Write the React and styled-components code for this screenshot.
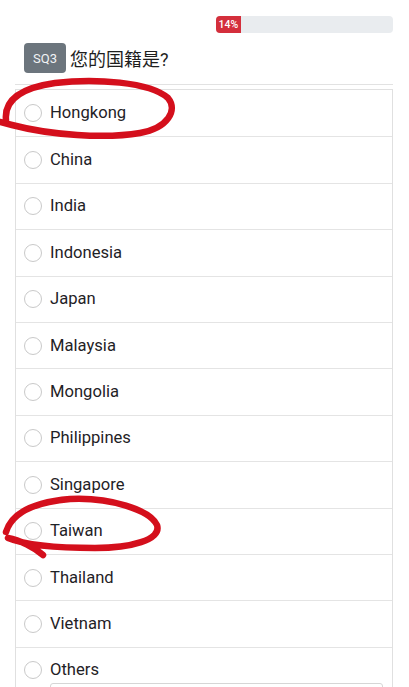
import React from "react";
import styled, { createGlobalStyle } from "styled-components";

const Global = createGlobalStyle`
  html, body { margin: 0; padding: 0; background: #fff; }
  body { font-family: Roboto, "Noto Sans", "Noto Sans CJK SC", sans-serif; color: #212529; }
  * { box-sizing: border-box; }
`;

const Page = styled.div`
  position: relative;
  width: 409px;
  height: 687px;
  overflow: hidden;
  padding: 16px 16px 0 15px;
`;

const ProgressRow = styled.div`
  display: flex;
  justify-content: flex-end;
`;

const Progress = styled.div`
  width: 177px;
  height: 17px;
  background: #e9ecef;
  border-radius: 4px;
  overflow: hidden;
  display: flex;
`;

const ProgressFill = styled.div`
  background: #d42f3c;
  color: #fff;
  font-size: 10.5px;
  font-weight: 500;
  line-height: 17px;
  text-align: center;
`;

const QuestionRow = styled.div`
  display: flex;
  align-items: center;
  gap: 4px;
  margin-top: 10px;
  padding-left: 9px;
`;

const Badge = styled.span`
  display: inline-flex;
  align-items: center;
  justify-content: center;
  width: 42px;
  height: 30px;
  background: #6c757d;
  color: #f2f3f5;
  border-radius: 4px;
  font-size: 13px;
`;

const QuestionText = styled.span`
  font-size: 18px;
  color: #1e1e1e;
  font-family: Roboto, "Noto Sans CJK SC", sans-serif;
`;

const Rule = styled.hr`
  border: 0;
  border-top: 1px solid #e2e2e2;
  margin: 11px 0 4px;
`;

const List = styled.div`
  border: 1px solid #e0e0e0;
  border-bottom: 0;
`;

const Row = styled.div`
  display: flex;
  flex-direction: column;
  justify-content: ${(p) => (p.$other ? "flex-start" : "center")};
  height: 46.4px;
  padding: ${(p) => (p.$other ? "12px 8px 0 8px" : "0 8px")};
  border-top: ${(p) => (p.$first ? "0" : "1px solid #e4e4e4")};
`;

const Label = styled.label`
  display: flex;
  align-items: center;
  gap: 8px;
  font-size: 16.6px;
  color: #1f2226;
  line-height: 20px;
`;

const Radio = styled.span`
  width: 18px;
  height: 18px;
  border-radius: 50%;
  border: 1px solid #c9c9c9;
  flex: none;
`;

const TextInput = styled.div`
  margin: 3px 0 0 26px;
  width: 333px;
  height: 30px;
  border: 1px solid #d6d6d6;
  border-radius: 3px;
`;

const Marks = styled.svg`
  position: absolute;
  left: 0;
  top: 0;
  pointer-events: none;
`;

const options = [
  "Hongkong",
  "China",
  "India",
  "Indonesia",
  "Japan",
  "Malaysia",
  "Mongolia",
  "Philippines",
  "Singapore",
  "Taiwan",
  "Thailand",
  "Vietnam",
];

export default function App() {
  return (
    <>
      <Global />
      <Page>
        <ProgressRow>
          <Progress>
            <ProgressFill style={{ width: "14%" }}>14%</ProgressFill>
          </Progress>
        </ProgressRow>
        <QuestionRow>
          <Badge>SQ3</Badge>
          <QuestionText>您的国籍是?</QuestionText>
        </QuestionRow>
        <Rule />
        <List>
          {options.map((o, i) => (
            <Row key={o} $first={i === 0}>
              <Label>
                <Radio />
                {o}
              </Label>
            </Row>
          ))}
          <Row $other>
            <Label>
              <Radio />
              Others
            </Label>
            <TextInput />
          </Row>
        </List>
        <Marks width="409" height="687" viewBox="0 0 409 687">
          <g fill="none" stroke="#d40f1c" strokeWidth="6.5" strokeLinecap="round" strokeLinejoin="round">
            <path d="M 6 120 C 4 100, 20 88, 55 83 C 95 78, 150 82, 168 98 C 178 110, 168 128, 140 133 C 105 139, 50 135, 12 125 L 0 122" />
            <path d="M 6 532 C 12 512, 35 502, 70 499 C 110 497, 150 510, 157 525 C 162 540, 130 548, 95 548 C 60 548, 25 545, 8 538 C 20 540, 35 548, 43 555" />
          </g>
        </Marks>
      </Page>
    </>
  );
}
